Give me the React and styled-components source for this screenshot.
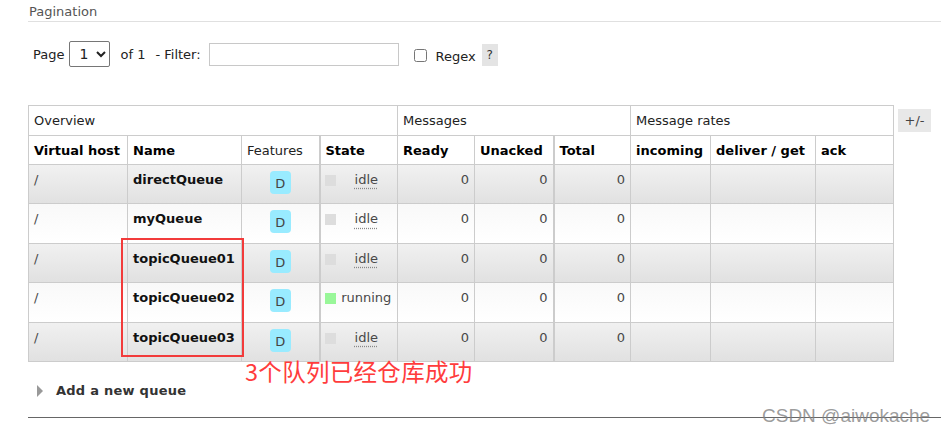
import React from "react";
import styled, { createGlobalStyle } from "styled-components";

const GlobalStyle = createGlobalStyle`
  html, body {
    margin: 0;
    padding: 0;
    background: #fff;
  }
  body {
    font-family: "DejaVu Sans", Verdana, sans-serif;
    font-size: 13px;
    color: #484848;
    overflow: hidden;
  }
`;

const Page = styled.div`
  position: relative;
  width: 941px;
  height: 432px;
  overflow: hidden;
`;

const Section = styled.div`
  padding-left: 28px;
`;

const SectionTitle = styled.h2`
  margin: 0;
  padding: 4px 0 0 1px;
  height: 17px;
  font-size: 13px;
  font-weight: normal;
  line-height: 15px;
  color: #555;
  border-bottom: 1px solid #e0e0e0;
`;

const Filters = styled.div`
  display: flex;
  align-items: center;
  height: 26px;
  margin-top: 19px;
  padding-left: 5px;
  color: #222;
  font-size: 13px;
`;

const Label = styled.span`
  margin-left: ${(p) => p.gap || 0}px;
  margin-top: ${(p) => p.drop || 0}px;
`;

const Select = styled.select`
  width: 41px;
  height: 26px;
  margin-left: 5px;
  font-family: "DejaVu Sans", sans-serif;
  font-size: 14px;
  color: #222;
  border: 1px solid #767676;
  border-radius: 2px;
  background: #fff;
  padding: 0 0 0 5px;
`;

const FilterInput = styled.input`
  width: 190px;
  height: 23px;
  box-sizing: border-box;
  margin-left: 8px;
  border: 1px solid #c8c8c8;
  padding: 0 4px;
`;

const Check = styled.input`
  width: 13px;
  height: 13px;
  margin: 2px 0 0 15px;
`;

const Help = styled.span`
  display: inline-flex;
  align-items: center;
  justify-content: center;
  width: 16px;
  height: 22px;
  margin: 2px 0 0 6px;
  background: #e4e4e4;
  font-size: 12px;
  color: #333;
`;

const TableArea = styled.div`
  display: flex;
  align-items: flex-start;
  margin: 38px 0 0 28px;
`;

const QueueTable = styled.table`
  width: 865px;
  table-layout: fixed;
  border-collapse: collapse;
  font-size: 13px;
`;

const GroupHead = styled.th`
  height: 29px;
  padding: 0 5px;
  text-align: left;
  font-weight: normal;
  color: #222;
  border: 1px solid #ccc;
`;

const ColHead = styled.th`
  height: 28px;
  padding: 0 5px;
  text-align: left;
  font-weight: ${(p) => (p.plain ? "normal" : "bold")};
  color: ${(p) => (p.plain ? "#222" : "#000")};
  border: 1px solid #ccc;
  border-right-width: ${(p) => (p.split ? 2 : 1)}px;
  white-space: nowrap;
`;

const Row = styled.tr`
  height: 39.4px;
  background: ${(p) =>
    p.alt
      ? "linear-gradient(#f1f1f1, #e1e1e1)"
      : "linear-gradient(#f9f9f9, #ffffff)"};
`;

const Cell = styled.td`
  padding: ${(p) => (p.badge ? 6 : 7)}px 5px 0;
  vertical-align: top;
  line-height: 16px;
  text-align: ${(p) => p.align || "left"};
  font-weight: ${(p) => (p.bold ? "bold" : "normal")};
  color: ${(p) => (p.bold ? "#111" : "#484848")};
  border: 1px solid #ccc;
  border-right-width: ${(p) => (p.split ? 2 : 1)}px;
  white-space: nowrap;
`;

const StateCell = styled(Cell)`
  padding: 7px 0 0 4px;
`;

const Badge = styled.span`
  display: inline-block;
  width: 21px;
  height: 23px;
  box-sizing: border-box;
  padding-top: 5px;
  border-radius: 4px;
  background: #99ebff;
  color: #444;
  font-size: 13px;
  line-height: 16px;
  text-align: center;
`;

const StateBox = styled.div`
  display: flex;
  align-items: flex-start;
`;

const StateDot = styled.span`
  flex: none;
  width: 11px;
  height: 11px;
  margin-top: 3px;
  background: ${(p) => (p.running ? "#99f799" : "#dddddd")};
`;

const StateText = styled.span`
  flex: 1;
  text-align: center;
  color: #484848;
  ${(p) =>
    p.idle &&
    `
    text-decoration: underline dotted #888;
    text-underline-offset: 4px;
  `}
`;

const PlusMinus = styled.span`
  display: flex;
  align-items: center;
  justify-content: center;
  width: 33px;
  height: 23px;
  margin: 4px 0 0 4px;
  background: #e8e8e8;
  color: #444;
  font-size: 13px;
`;

const AddQueue = styled.div`
  display: flex;
  align-items: center;
  margin: 21px 0 0 37px;
  height: 16px;
  font-weight: bold;
  font-size: 13px;
  color: #333;
  letter-spacing: 0.25px;
`;

const Arrow = styled.span`
  width: 0;
  height: 0;
  margin-right: 13px;
  border-top: 6px solid transparent;
  border-bottom: 6px solid transparent;
  border-left: 6px solid #999;
`;

const Divider = styled.hr`
  margin: 18px 0 0 28px;
  border: 0;
  border-top: 1px solid #666;
`;

const Highlight = styled.div`
  position: absolute;
  left: 121px;
  top: 238px;
  width: 123px;
  height: 119px;
  box-sizing: border-box;
  border: 2px solid #f23b3b;
`;

const Note = styled.div`
  position: absolute;
  left: 245px;
  top: 356px;
  font-family: "Noto Sans CJK SC", sans-serif;
  font-size: 23.5px;
  line-height: 30px;
  color: #ff3c3c;
  letter-spacing: 0.3px;
`;

const Watermark = styled.div`
  position: absolute;
  left: 762px;
  top: 405px;
  font-family: "Liberation Sans", Arial, sans-serif;
  font-size: 19px;
  line-height: 22px;
  color: rgba(130, 130, 130, 0.8);
`;

const queues = [
  { name: "directQueue", state: "idle" },
  { name: "myQueue", state: "idle" },
  { name: "topicQueue01", state: "idle" },
  { name: "topicQueue02", state: "running" },
  { name: "topicQueue03", state: "idle" },
];

const widths = [99, 114, 78, 78, 77, 79, 77, 80, 105, 78];

export default function App() {
  return (
    <Page>
      <GlobalStyle />
      <Section>
        <SectionTitle>Pagination</SectionTitle>
        <Filters>
          <Label>Page</Label>
          <Select defaultValue="1">
            <option value="1">1</option>
          </Select>
          <Label gap={10}>of 1</Label>
          <Label gap={10}>- Filter:</Label>
          <FilterInput type="text" />
          <Check type="checkbox" />
          <Label gap={9} drop={5}>Regex</Label>
          <Help>?</Help>
        </Filters>
      </Section>

      <TableArea>
        <QueueTable>
          <colgroup>
            {widths.map((w, i) => (
              <col key={i} style={{ width: w }} />
            ))}
          </colgroup>
          <thead>
            <tr>
              <GroupHead colSpan={4}>Overview</GroupHead>
              <GroupHead colSpan={3}>Messages</GroupHead>
              <GroupHead colSpan={3}>Message rates</GroupHead>
            </tr>
            <tr>
              <ColHead>Virtual host</ColHead>
              <ColHead>Name</ColHead>
              <ColHead plain split>Features</ColHead>
              <ColHead>State</ColHead>
              <ColHead>Ready</ColHead>
              <ColHead split>Unacked</ColHead>
              <ColHead>Total</ColHead>
              <ColHead>incoming</ColHead>
              <ColHead>deliver / get</ColHead>
              <ColHead>ack</ColHead>
            </tr>
          </thead>
          <tbody>
            {queues.map((q, i) => (
              <Row key={q.name} alt={i % 2 === 0}>
                <Cell>/</Cell>
                <Cell bold>{q.name}</Cell>
                <Cell badge align="center" split>
                  <Badge>D</Badge>
                </Cell>
                <StateCell>
                  <StateBox>
                    <StateDot running={q.state === "running"} />
                    <StateText idle={q.state === "idle"}>{q.state}</StateText>
                  </StateBox>
                </StateCell>
                <Cell align="right">0</Cell>
                <Cell align="right" split>0</Cell>
                <Cell align="right">0</Cell>
                <Cell />
                <Cell />
                <Cell />
              </Row>
            ))}
          </tbody>
        </QueueTable>
        <PlusMinus>+/-</PlusMinus>
      </TableArea>

      <AddQueue>
        <Arrow />
        Add a new queue
      </AddQueue>
      <Divider />

      <Highlight />
      <Note>3个队列已经仓库成功</Note>
      <Watermark>CSDN @aiwokache</Watermark>
    </Page>
  );
}
